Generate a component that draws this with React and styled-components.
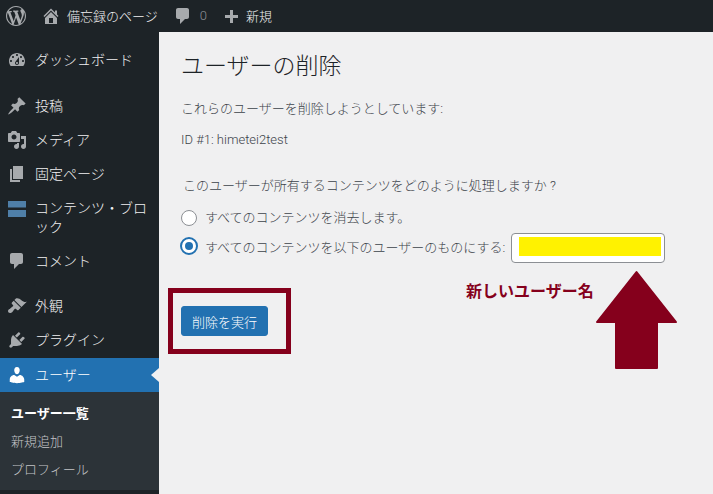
import React from "react";
import styled, { createGlobalStyle } from "styled-components";

const GlobalStyle = createGlobalStyle`
  html, body { margin: 0; padding: 0; height: 100%; overflow: hidden; }
  body {
    background: #f0f0f1;
    color: #3c434a;
    font-family: Roboto, "Noto Sans CJK JP", sans-serif;
    font-size: 13px;
    font-weight: 300;
  }
`;

const Page = styled.div`
  position: relative;
  width: 713px;
  height: 494px;
  overflow: hidden;
  display: flex;
  flex-direction: column;
`;

const AdminBar = styled.header`
  height: 32px;
  flex: none;
  background: #1d2327;
  color: #f0f0f1;
  display: flex;
  align-items: center;
  padding-left: 6px;
  font-size: 13px;
`;

const BarIcon = styled.svg`
  flex: none;
  fill: #a7aaad;
  width: 20px;
  height: 20px;
  margin-right: ${(p) => p.$gap || 5}px;
`;

const BarItem = styled.div`
  display: flex;
  align-items: center;
  padding-bottom: 1px;
  margin-right: ${(p) => p.$gap || 0}px;
  color: ${(p) => (p.$muted ? "#8c8f94" : "#f0f0f1")};
`;

const Body = styled.div`
  flex: 1;
  display: flex;
  min-height: 0;
`;

const Sidebar = styled.nav`
  width: 159px;
  flex: none;
  background: #1d2327;
  padding-top: 11px;
  box-sizing: border-box;
`;

const MenuItem = styled.div`
  display: flex;
  align-items: ${(p) => (p.$tall ? "flex-start" : "center")};
  padding: ${(p) => (p.$tall ? "8px 0 0 7px" : "0 0 0 7px")};
  height: ${(p) => (p.$tall ? "53px" : "34px")};
  box-sizing: border-box;
  margin-bottom: ${(p) => p.$after || 0}px;
  position: relative;
  color: ${(p) => (p.$active ? "#fff" : "#f0f0f1")};
  background: ${(p) => (p.$active ? "#2271b1" : "transparent")};
  font-size: 14px;
  line-height: 19px;
`;

const MenuIcon = styled.svg`
  flex: none;
  width: 20px;
  height: 20px;
  margin-right: 8px;
  fill: ${(p) => p.$fill || "#a7aaad"};
`;

const ActiveNotch = styled.span`
  position: absolute;
  right: 0;
  top: 10px;
  border: 7px solid transparent;
  border-left-width: 0;
  border-right: 8px solid #f0f0f1;
`;

const SubMenu = styled.div`
  background: #2c3338;
  padding: 8px 0 6px;
  height: 98px;
  box-sizing: border-box;
`;

const SubItem = styled.div`
  height: 28px;
  line-height: 28px;
  padding-left: 11px;
  font-size: 13px;
  font-weight: ${(p) => (p.$current ? 700 : 300)};
  color: ${(p) => (p.$current ? "#fff" : "#c3c4c7")};
`;

const Content = styled.main`
  flex: 1;
  padding-left: 22px;
`;

const Title = styled.h1`
  margin: 19px 0 0;
  font-size: 23px;
  font-weight: 300;
  line-height: 32px;
  color: #1d2327;
`;

const Paragraph = styled.p`
  margin: ${(p) => p.$top}px 0 0 ${(p) => p.$left || 0}px;
  font-size: 13px;
  line-height: 20px;
  color: #3c434a;
`;

const RadioRow = styled.label`
  display: flex;
  align-items: center;
  height: ${(p) => p.$height}px;
  margin-top: ${(p) => p.$top || 0}px;
`;

const RadioText = styled.span`
  padding-bottom: ${(p) => p.$lift}px;
`;

const Radio = styled.span`
  flex: none;
  box-sizing: border-box;
  width: 16px;
  height: 16px;
  margin-right: 8px;
  border-radius: 50%;
  border: 1px solid #8c8f94;
  background: #fff;
  display: flex;
  align-items: center;
  justify-content: center;
  ${(p) =>
    p.$checked &&
    `
    border: 2px solid #2271b1;
    width: 18px;
    height: 18px;
    margin: 0 7px 4px -1px;
    &::after {
      content: "";
      width: 8px;
      height: 8px;
      border-radius: 50%;
      background: #2271b1;
    }
  `}
`;

const UserField = styled.div`
  margin-left: 6px;
  width: 154px;
  height: 30px;
  box-sizing: border-box;
  border: 1px solid #8c8f94;
  border-radius: 4px;
  background: #fff;
  padding: 3px 3px 3px 7px;
`;

const Highlight = styled.div`
  height: 19px;
  background: #fff200;
`;

const SubmitButton = styled.button`
  display: block;
  margin: 43px 0 0;
  width: 87px;
  height: 30px;
  border: 1px solid #2271b1;
  border-radius: 3px;
  background: #2271b1;
  color: #fff;
  font-family: inherit;
  font-size: 13px;
  font-weight: 300;
  padding: 0;
`;

const RedBox = styled.div`
  position: absolute;
  left: 168px;
  top: 288px;
  width: 123px;
  height: 66px;
  box-sizing: border-box;
  border: 5px solid #85001c;
`;

const Note = styled.div`
  position: absolute;
  left: 466px;
  top: 281px;
  font-size: 16px;
  font-weight: 700;
  line-height: 22px;
  color: #85001c;
`;

const ArrowSvg = styled.svg`
  position: absolute;
  left: 595px;
  top: 270px;
  width: 83px;
  height: 100px;
  fill: #85001c;
  stroke: #85001c;
  stroke-width: 2;
  stroke-linejoin: round;
`;

const barIcons = {
  logo: "M20 10c0-5.51-4.49-10-10-10C4.48 0 0 4.49 0 10c0 5.52 4.48 10 10 10 5.51 0 10-4.48 10-10zM7.78 15.37L4.37 6.22c.55-.02 1.17-.08 1.17-.08.5-.06.44-1.13-.06-1.11 0 0-1.45.11-2.37.11-.18 0-.37 0-.58-.01C4.12 2.69 6.91 1.03 10 1.03c2.3 0 4.39.87 5.96 2.3-.66-.11-1.6.38-1.6 1.53 0 .71.43 1.31.89 2.02.35.61.55 1.36.55 2.46 0 1.49-1.4 5-1.4 5l-3.03-8.37c.54-.02.82-.17.82-.17.5-.05.44-1.25-.06-1.22 0 0-1.44.12-2.38.12-.87 0-2.33-.12-2.33-.12-.5-.03-.56 1.2-.06 1.22l.92.08 1.26 3.41zM17.41 10c.24-.64.74-1.87.43-4.25.7 1.29 1.05 2.71 1.05 4.25 0 3.29-1.73 6.24-4.4 7.78.97-2.59 1.94-5.21 2.92-7.78zM6.1 18.09C3.12 16.65 1.11 13.53 1.11 10c0-1.3.23-2.48.72-3.59C3.25 10.3 4.67 14.2 6.1 18.09zm4.03-6.63l2.58 6.98c-.86.29-1.74.45-2.71.45-.81 0-1.6-.12-2.34-.34z",
  home: "M16 8.5l1.53 1.53-1.06 1.06L10 4.62l-6.47 6.47-1.06-1.06L10 2.5l4 4v-2h2v4zm-6-2.46l6 5.99V18H4v-5.97zM12 17v-5H8v5h4z",
  comment: "M5 2h9c1.1 0 2 .9 2 2v7c0 1.1-.9 2-2 2h-2l-5 5v-5H5c-1.1 0-2-.9-2-2V4c0-1.1.9-2 2-2z",
  plus: "M17 7v3h-5v5H9v-5H4V7h5V2h3v5h5z",
};

const icons = {
  dashboard: "M3.76 16h12.48c1.1-1.37 1.76-3.11 1.76-5 0-4.42-3.58-8-8-8s-8 3.58-8 8c0 1.89.66 3.63 1.76 5zM10 4c.55 0 1 .45 1 1s-.45 1-1 1-1-.45-1-1 .45-1 1-1zM6 6c.55 0 1 .45 1 1s-.45 1-1 1-1-.45-1-1 .45-1 1-1zm8 0c.55 0 1 .45 1 1s-.45 1-1 1-1-.45-1-1 .45-1 1-1zm-5.37 5.55L12 7v6c0 1.1-.9 2-2 2s-2-.9-2-2c0-.57.24-1.08.63-1.45zM4 10c.55 0 1 .45 1 1s-.45 1-1 1-1-.45-1-1 .45-1 1-1zm12 0c.55 0 1 .45 1 1s-.45 1-1 1-1-.45-1-1 .45-1 1-1zm-5 3c0-.55-.45-1-1-1s-1 .45-1 1 .45 1 1 1 1-.45 1-1z",
  post: "M10.44 3.02l1.82-1.82 6.36 6.35-1.83 1.82c-1.05-.68-2.48-.57-3.41.36l-.75.75c-.92.93-1.04 2.35-.35 3.41l-1.83 1.82-2.41-2.41-2.8 2.79c-.42.42-3.38 2.71-3.8 2.29s1.86-3.39 2.28-3.81l2.79-2.79L4.1 9.36l1.83-1.82c1.05.69 2.48.57 3.4-.36l.75-.75c.93-.92 1.05-2.35.36-3.41z",
  media: "M13 11V4c0-.55-.45-1-1-1h-1.67L9 1H5L3.67 3H2c-.55 0-1 .45-1 1v7c0 .55.45 1 1 1h10c.55 0 1-.45 1-1zM7 4.5c1.38 0 2.5 1.12 2.5 2.5S8.38 9.5 7 9.5 4.5 8.38 4.5 7 5.62 4.5 7 4.5zM14 6h5v10.5c0 1.38-1.12 2.5-2.5 2.5S14 17.88 14 16.5s1.12-2.5 2.5-2.5c.17 0 .34.02.5.05V9h-3V6zm-4 8.05V13h2v3.5c0 1.38-1.12 2.5-2.5 2.5S7 17.88 7 16.5 8.12 14 9.5 14c.17 0 .34.02.5.05z",
  page: "M6 15V2h10v13H6zm-1 1h8v2H3V5h2v11z",
  comment: barIcons.comment,
  appearance: "M14.48 11.06L7.41 3.99l1.5-1.5c.5-.56 2.3-.47 3.51.32 1.21.8 1.43 1.28 2.91 2.1 1.18.64 2.45 1.26 4.45.85zm-.71.71L6.7 4.7 4.93 6.47c-.39.39-.39 1.02 0 1.41l1.06 1.06c.39.39.39 1.03 0 1.42-.6.6-1.43 1.11-2.21 1.69-.35.26-.7.53-1.01.84C1.43 13.23 1 14.22 1 15c0 1.11.89 2 2 2 .78 0 1.77-.43 2.11-.77.31-.31.58-.66.84-1.01.58-.78 1.09-1.61 1.69-2.21.39-.39 1.02-.39 1.41 0l1.06 1.06c.39.39 1.02.39 1.41 0z",
  plugin: "M13.11 4.36L9.87 7.6 8 5.73l3.24-3.24c.35-.34 1.05-.2 1.56.32.52.51.66 1.21.31 1.55zm-8 1.77l.91-1.12 9.01 9.01-1.19.84c-.71.71-2.63 1.16-3.82 1.16H6.14L4.9 17.26c-.59.59-1.54.59-2.12 0-.59-.58-.59-1.53 0-2.12l1.24-1.24v-3.88c0-1.13.4-3.1 1.09-3.89zm7.26 3.97l3.24-3.24c.34-.35 1.04-.21 1.55.31.52.51.66 1.21.31 1.55l-3.24 3.25z",
  user: "M10 9.25c-2.27 0-2.73-3.44-2.73-3.44C7 4.02 7.82 2 9.97 2c2.16 0 2.98 2.02 2.71 3.81 0 0-.41 3.44-2.68 3.44zm0 2.57L12.72 10c2.39 0 4.52 2.33 4.52 4.53v2.49s-3.65 1.13-7.24 1.13c-3.65 0-7.24-1.13-7.24-1.13v-2.49c0-2.25 1.94-4.48 4.47-4.48z",
  blocks: "M1 2h18v6.500H1zM1 11h18v7H1z",
};

const menu = [
  { label: "ダッシュボード", icon: "dashboard", after: 12 },
  { label: "投稿", icon: "post" },
  { label: "メディア", icon: "media" },
  { label: "固定ページ", icon: "page" },
  { label: "コンテンツ・ブロック", icon: "blocks", tall: true, fill: "#4f7fa8" },
  { label: "コメント", icon: "comment", after: 11 },
  { label: "外観", icon: "appearance" },
  { label: "プラグイン", icon: "plugin", after: 1 },
];

export default function App() {
  return (
    <Page>
      <GlobalStyle />
      <AdminBar>
        <BarIcon viewBox="0 0 20 20" $gap={15}><path d={barIcons.logo} /></BarIcon>
        <BarIcon viewBox="0 0 20 20" $gap={6}><path fillRule="evenodd" d={barIcons.home} /></BarIcon>
        <BarItem $gap={15}>備忘録のページ</BarItem>
        <BarIcon viewBox="0 0 20 20" $gap={7}><path d={barIcons.comment} /></BarIcon>
        <BarItem $gap={14} $muted>0</BarItem>
        <BarIcon viewBox="0 -2 20 20" $gap={5}><path d={barIcons.plus} /></BarIcon>
        <BarItem>新規</BarItem>
      </AdminBar>
      <Body>
        <Sidebar>
          {menu.map((item) => (
            <MenuItem key={item.label} $tall={item.tall} $after={item.after}>
              <MenuIcon viewBox="0 0 20 20" $fill={item.fill}>
                <path fillRule="evenodd" d={icons[item.icon]} />
              </MenuIcon>
              <span>{item.label}</span>
            </MenuItem>
          ))}
          <MenuItem $active>
            <MenuIcon viewBox="0 0 20 20" $fill="#fff"><path d={icons.user} /></MenuIcon>
            <span>ユーザー</span>
            <ActiveNotch />
          </MenuItem>
          <SubMenu>
            <SubItem $current>ユーザー一覧</SubItem>
            <SubItem>新規追加</SubItem>
            <SubItem>プロフィール</SubItem>
          </SubMenu>
        </Sidebar>
        <Content>
          <Title>ユーザーの削除</Title>
          <Paragraph $top={16}>これらのユーザーを削除しようとしています:</Paragraph>
          <Paragraph $top={11}>ID #1: himetei2test</Paragraph>
          <Paragraph $top={26} $left={2}>このユーザーが所有するコンテンツをどのように処理しますか ?</Paragraph>
          <RadioRow $height={29} $top={7}>
            <Radio />
            <RadioText $lift={2}>すべてのコンテンツを消去します。</RadioText>
          </RadioRow>
          <RadioRow $height={30} $top={1}>
            <Radio $checked />
            <RadioText $lift={4}>すべてのコンテンツを以下のユーザーのものにする:</RadioText>
            <UserField><Highlight /></UserField>
          </RadioRow>
          <SubmitButton>削除を実行</SubmitButton>
        </Content>
      </Body>
      <RedBox />
      <Note>新しいユーザー名</Note>
      <ArrowSvg viewBox="0 0 83 100">
        <path d="M41.500 2 81 52H62V98H21V52H2z" />
      </ArrowSvg>
    </Page>
  );
}
